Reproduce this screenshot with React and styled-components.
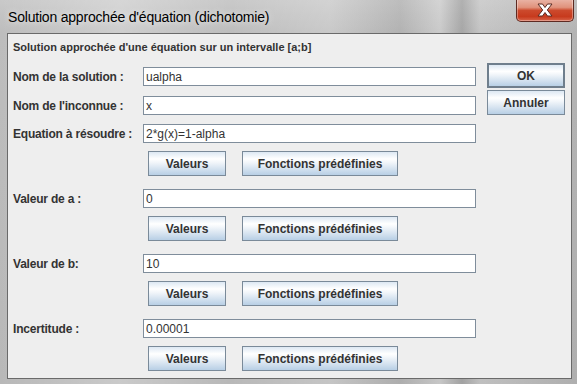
import React from "react";
import styled, { createGlobalStyle } from "styled-components";

const Global = createGlobalStyle`
  html, body { margin: 0; padding: 0; background: #c4c4c4; }
  body { font-family: "Liberation Sans", Arial, sans-serif; }
`;

const Frame = styled.div`
  width: 577px;
  height: 384px;
  box-sizing: border-box;
  display: flex;
  flex-direction: column;
  background:
    linear-gradient(90deg, rgba(255,255,255,0) 0px, rgba(255,255,255,0.25) 120px, rgba(255,255,255,0) 230px, rgba(255,255,255,0.18) 330px, rgba(0,0,0,0.06) 400px, rgba(255,255,255,0.2) 440px, rgba(0,0,0,0.12) 462px, rgba(255,255,255,0.1) 480px, rgba(0,0,0,0.05) 577px),
    linear-gradient(180deg, #c9c9c9 0px, #bdbdbd 33px, #b8b8b8 384px);
  padding: 0 5px 5px 7px;
`;

const TitleBar = styled.div`
  height: 33px;
  display: flex;
  align-items: flex-start;
  justify-content: space-between;
  flex-shrink: 0;
`;

const TitleText = styled.div`
  font-family: "Liberation Sans", Arial, sans-serif;
  font-size: 14px;
  letter-spacing: -0.2px;
  color: #000;
  margin-top: 9px;
  margin-left: 1px;
  text-shadow: 0 0 6px rgba(255,255,255,0.8);
`;

const CloseButton = styled.div`
  width: 58px;
  height: 23px;
  margin-top: -1px;
  margin-right: -2px;
  box-sizing: border-box;
  border: 1px solid #5e2a22;
  border-top: none;
  border-radius: 0 0 5px 5px;
  background: linear-gradient(180deg, #eab6a8 0%, #e0927c 38%, #cc4a2d 52%, #c73a1d 80%, #d8654a 100%);
  box-shadow: inset 0 0 0 1px rgba(255,255,255,0.35);
  display: flex;
  align-items: center;
  justify-content: center;
`;

const Panel = styled.div`
  flex: 1;
  background: #eeeeee;
  border: 1px solid #6a6a6a;
  display: grid;
  grid-template-columns: 468px 1fr;
  padding: 6px 0 0 0;
`;

const Form = styled.div`
  display: flex;
  flex-direction: column;
`;

const Heading = styled.div`
  font-size: 11px;
  font-weight: bold;
  line-height: 15px;
  color: #333333;
  padding-left: 5px;
`;

const Row = styled.div`
  display: grid;
  grid-template-columns: 135px 333px;
  align-items: center;
  margin-top: ${(p) => p.$top}px;
`;

const Label = styled.div`
  font-size: 12px;
  font-weight: bold;
  color: #333333;
  padding-left: 5px;
  letter-spacing: -0.2px;
`;

const Field = styled.div`
  height: 19px;
  box-sizing: border-box;
  border: 1px solid #7f8d9b;
  background: #ffffff;
  font-size: 12px;
  color: #333333;
  padding-left: 2px;
  display: flex;
  align-items: center;
`;

const ButtonRow = styled.div`
  display: flex;
  gap: 16px;
  padding-left: 140px;
  margin-top: 8px;
`;

const Button = styled.div`
  width: ${(p) => p.$w}px;
  height: 25px;
  box-sizing: border-box;
  border: ${(p) => (p.$default ? "2px solid #6f7e8c" : "1px solid #7a8a99")};
  background: linear-gradient(180deg, #dde8f3 0%, #ffffff 30%, #f2f6fa 45%, #b8cfe5 100%);
  font-size: 12px;
  font-weight: bold;
  color: #333333;
  display: flex;
  align-items: center;
  justify-content: center;
`;

const Side = styled.div`
  display: flex;
  flex-direction: column;
  gap: 2px;
  padding-top: 23px;
  padding-left: 11px;
`;

const CloseX = () => (
  <svg width="18" height="14" viewBox="0 0 18 14">
    <path
      d="M2 1 H6.5 L9 4.5 L11.5 1 H16 L11.3 7 L16 13 H11.5 L9 9.5 L6.5 13 H2 L6.7 7 Z"
      fill="#ffffff"
      stroke="#5a2a22"
      strokeWidth="1"
      strokeLinejoin="round"
    />
  </svg>
);

const Buttons = () => (
  <ButtonRow>
    <Button $w={78}>Valeurs</Button>
    <Button $w={156}>Fonctions prédéfinies</Button>
  </ButtonRow>
);

export default function App() {
  return (
    <>
      <Global />
      <Frame>
        <TitleBar>
          <TitleText>Solution approchée d'équation (dichotomie)</TitleText>
          <CloseButton>
            <CloseX />
          </CloseButton>
        </TitleBar>
        <Panel>
          <Form>
            <Heading>Solution approchée d'une équation sur un intervalle [a;b]</Heading>
            <Row $top={12}>
              <Label>Nom de la solution :</Label>
              <Field>ualpha</Field>
            </Row>
            <Row $top={10}>
              <Label>Nom de l'inconnue :</Label>
              <Field>x</Field>
            </Row>
            <Row $top={9}>
              <Label>Equation à résoudre :</Label>
              <Field>2*g(x)=1-alpha</Field>
            </Row>
            <Buttons />
            <Row $top={13}>
              <Label>Valeur de a :</Label>
              <Field>0</Field>
            </Row>
            <Buttons />
            <Row $top={13}>
              <Label>Valeur de b:</Label>
              <Field>10</Field>
            </Row>
            <Buttons />
            <Row $top={13}>
              <Label>Incertitude :</Label>
              <Field>0.00001</Field>
            </Row>
            <Buttons />
          </Form>
          <Side>
            <Button $w={78} $default>OK</Button>
            <Button $w={78}>Annuler</Button>
          </Side>
        </Panel>
      </Frame>
    </>
  );
}
